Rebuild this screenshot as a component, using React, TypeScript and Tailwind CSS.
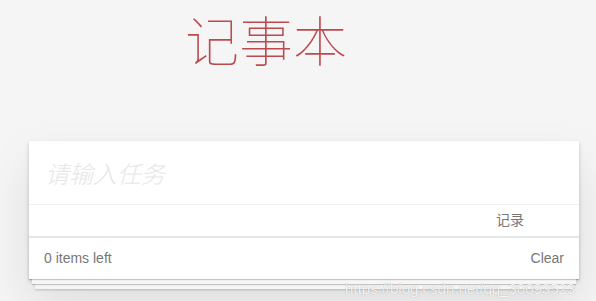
const App = () => {
  return (
    <div className="relative min-h-[301px] w-[596px] overflow-hidden bg-[#f5f5f5] font-['Liberation_Sans','Noto_Sans_CJK_SC',sans-serif]">
      {/* Title */}
      <div className="flex justify-center pr-[64px]">
        <h1 className="text-[54px] leading-[78px] font-thin text-[#bc4b4f] font-['Noto_Sans_CJK_SC',sans-serif]">
          记事本
        </h1>
      </div>

      {/* Card */}
      <div className="ml-[29px] mt-[63px] w-[550px] bg-white shadow-[0_2px_4px_0_rgba(0,0,0,0.2),0_25px_50px_0_rgba(0,0,0,0.1)]">
        <div className="h-[64px] border-b border-[#f1f1f1] flex items-center pl-[16px]">
          <input
            className="w-full bg-transparent text-[24px] italic font-light outline-none placeholder:text-[#e6e6e6] font-['Noto_Sans_CJK_SC',sans-serif]"
            placeholder="请输入任务"
          />
        </div>
        <div className="h-[31px] flex justify-end pr-[55px] pt-[2px]">
          <span className="text-[14px] leading-[24px] text-[#777] font-['Noto_Sans_CJK_SC',sans-serif]">记录</span>
        </div>
        <div className="relative h-[43px] border-t-2 border-[#e6e6e6] flex items-center justify-between px-[15px] text-[14px] text-[#777] bg-white shadow-[0_1px_1px_rgba(0,0,0,0.2),0_8px_0_-3px_#f6f6f6,0_9px_1px_-3px_rgba(0,0,0,0.2),0_16px_0_-6px_#f6f6f6,0_17px_2px_-6px_rgba(0,0,0,0.2)]">
          <span>0 items left</span>
          <span>Clear</span>
        </div>
      </div>

      {/* watermark */}
      <div className="absolute left-[345px] top-[278px] text-[15px] text-white/90 [text-shadow:0_0_1px_rgba(0,0,0,0.35)]">
        https://blog.csdn.net/qq_30093523
      </div>
    </div>
  );
};

export default App;
